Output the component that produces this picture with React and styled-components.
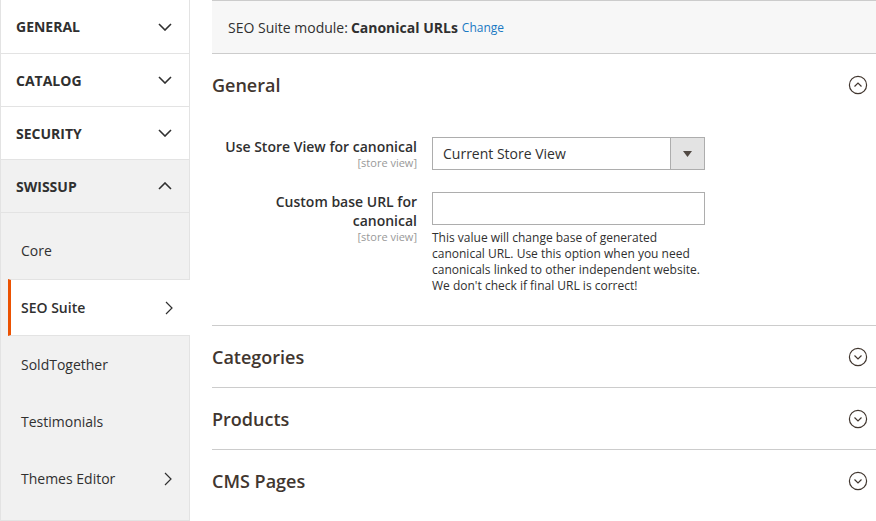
import React from "react";
import styled, { createGlobalStyle } from "styled-components";

const Global = createGlobalStyle`
  html, body { margin: 0; padding: 0; background: #fff; }
  body { font-family: "Open Sans", "Noto Sans", sans-serif; color: #303030; }
  * { box-sizing: border-box; }
`;

const Page = styled.div`
  display: flex;
  width: 876px;
  height: 521px;
  overflow: hidden;
  align-items: flex-start;
`;

const Sidebar = styled.nav`
  width: 190px;
  flex: none;
  border-left: 1px solid #e3e3e3;
  border-right: 1px solid #e3e3e3;
  border-bottom: 1px solid #e3e3e3;
`;

const TopItem = styled.div`
  height: 53px;
  display: flex;
  align-items: center;
  justify-content: space-between;
  padding: 0 17px 0 15px;
  border-bottom: 1px solid #e3e3e3;
  background: ${(p) => (p.$open ? "#f1f1f1" : "#fff")};
  font-size: 14px;
  font-weight: 700;
  color: #303030;
  text-transform: uppercase;
  &:first-child { height: 54px; }
`;

const SubList = styled.div`
  background: #f1f1f1;
  padding: 9px 0 13px 0;
`;

const SubItem = styled.div`
  height: 57px;
  margin-left: 7px;
  display: flex;
  align-items: center;
  justify-content: space-between;
  padding: 0 17px 0 10px;
  font-size: 14px;
  color: #303030;
  font-weight: ${(p) => (p.$active ? 600 : 400)};
  background: ${(p) => (p.$active ? "#fff" : "transparent")};
  border-left: 3px solid ${(p) => (p.$active ? "#eb5202" : "transparent")};
  border-top: 1px solid ${(p) => (p.$active ? "#e3e3e3" : "transparent")};
  border-bottom: 1px solid ${(p) => (p.$active ? "#e3e3e3" : "transparent")};
  margin-right: ${(p) => (p.$active ? "-1px" : "0")};
`;

const Main = styled.main`
  flex: 1;
  margin-left: 22px;
`;

const Notice = styled.div`
  height: 54px;
  background: #f7f7f7;
  border-top: 1px solid #cccccc;
  border-bottom: 1px solid #cccccc;
  display: flex;
  align-items: center;
  padding-left: 16px;
  font-size: 14px;
  color: #303030;
  strong { font-weight: 700; margin-left: 3px; }
`;

const Link = styled.a`
  color: #1979c3;
  font-size: 12px;
  margin-left: 4px;
  text-decoration: none;
`;

const Section = styled.section`
  border-bottom: 1px solid ${(p) => (p.$last ? "transparent" : "#cccccc")};
`;

const SectionHead = styled.div`
  height: ${(p) => (p.$h ? p.$h : 61)}px;
  display: flex;
  align-items: center;
  justify-content: space-between;
  font-size: 18px;
  font-weight: 600;
  color: #41362f;
  padding-right: 8px;
`;

const Form = styled.div`
  display: flex;
  flex-direction: column;
  gap: 22px;
  padding: 22px 0 31px 0;
`;

const Row = styled.div`
  display: grid;
  grid-template-columns: 205px 273px;
  column-gap: 15px;
  align-items: start;
`;

const LabelCol = styled.div`
  text-align: right;
`;

const Label = styled.div`
  font-size: 14px;
  font-weight: 600;
  color: #303030;
  line-height: 19px;
`;

const Scope = styled.div`
  font-size: 11px;
  color: #999;
  line-height: 14px;
`;

const SelectBox = styled.div`
  height: 33px;
  border: 1px solid #adadad;
  display: flex;
  background: #fff;
  font-size: 14px;
  color: #303030;
`;

const SelectText = styled.div`
  flex: 1;
  display: flex;
  align-items: center;
  padding-left: 10px;
`;

const SelectButton = styled.div`
  width: 34px;
  background: #e3e3e3;
  border-left: 1px solid #adadad;
  display: flex;
  align-items: center;
  justify-content: center;
`;

const TextInput = styled.div`
  height: 33px;
  border: 1px solid #adadad;
  background: #fff;
`;

const Note = styled.div`
  font-size: 12px;
  line-height: 16px;
  color: #303030;
  margin-top: 5px;
`;

const ChevronDown = () => (
  <svg width="14" height="8" viewBox="0 0 14 8">
    <path d="M1 1 L7 7 L13 1" fill="none" stroke="#303030" strokeWidth="1.6" />
  </svg>
);
const ChevronUp = () => (
  <svg width="14" height="8" viewBox="0 0 14 8">
    <path d="M1 7 L7 1 L13 7" fill="none" stroke="#303030" strokeWidth="1.6" />
  </svg>
);
const ChevronRight = () => (
  <svg width="8" height="14" viewBox="0 0 8 14">
    <path d="M1 1 L7 7 L1 13" fill="none" stroke="#303030" strokeWidth="1.2" />
  </svg>
);

const CircleToggle = ({ up }) => (
  <svg width="20" height="20" viewBox="0 0 20 20">
    <circle cx="10" cy="10" r="8.6" fill="none" stroke="#41362f" strokeWidth="1.2" />
    <path
      d={up ? "M6.5 11.5 L10 8 L13.5 11.5" : "M6.5 8.5 L10 12 L13.5 8.5"}
      fill="none"
      stroke="#41362f"
      strokeWidth="1.2"
    />
  </svg>
);

const Caret = () => (
  <svg width="9" height="6" viewBox="0 0 9 6">
    <path d="M0 0 L9 0 L4.5 6 Z" fill="#514943" />
  </svg>
);

export default function App() {
  return (
    <>
      <Global />
      <Page>
        <Sidebar>
          <TopItem>General<ChevronDown /></TopItem>
          <TopItem>Catalog<ChevronDown /></TopItem>
          <TopItem>Security<ChevronDown /></TopItem>
          <TopItem $open>Swissup<ChevronUp /></TopItem>
          <SubList>
            <SubItem>Core</SubItem>
            <SubItem $active>SEO Suite<ChevronRight /></SubItem>
            <SubItem>SoldTogether</SubItem>
            <SubItem>Testimonials</SubItem>
            <SubItem>Themes Editor<ChevronRight /></SubItem>
          </SubList>
        </Sidebar>
        <Main>
          <Notice>
            SEO Suite module: <strong>Canonical URLs</strong>
            <Link href="#">Change</Link>
          </Notice>
          <Section>
            <SectionHead $h={61}>
              General
              <CircleToggle up />
            </SectionHead>
            <Form>
              <Row>
                <LabelCol>
                  <Label>Use Store View for canonical</Label>
                  <Scope>[store view]</Scope>
                </LabelCol>
                <SelectBox>
                  <SelectText>Current Store View</SelectText>
                  <SelectButton><Caret /></SelectButton>
                </SelectBox>
              </Row>
              <Row>
                <LabelCol>
                  <Label>Custom base URL for canonical</Label>
                  <Scope>[store view]</Scope>
                </LabelCol>
                <div>
                  <TextInput />
                  <Note>
                    This value will change base of generated canonical URL. Use this option when you need canonicals linked to other independent website. We don't check if final URL is correct!
                  </Note>
                </div>
              </Row>
            </Form>
          </Section>
          <Section>
            <SectionHead>Categories<CircleToggle /></SectionHead>
          </Section>
          <Section>
            <SectionHead>Products<CircleToggle /></SectionHead>
          </Section>
          <Section $last>
            <SectionHead>CMS Pages<CircleToggle /></SectionHead>
          </Section>
        </Main>
      </Page>
    </>
  );
}
